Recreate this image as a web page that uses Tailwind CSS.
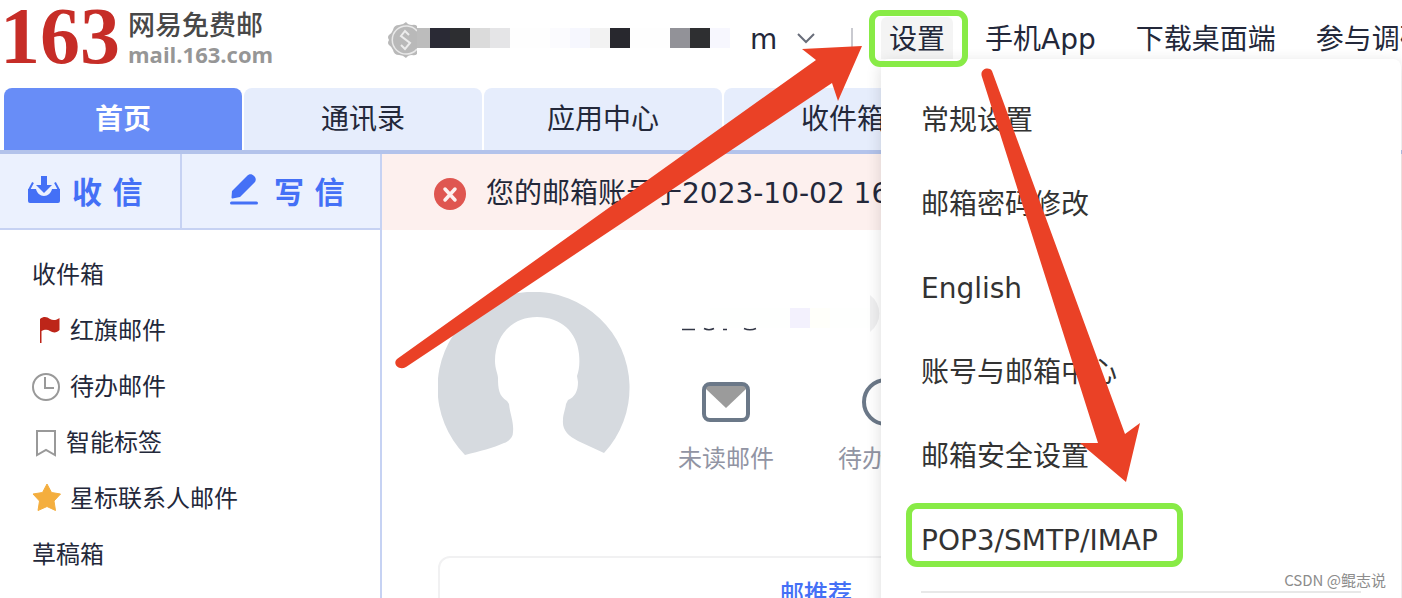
<!DOCTYPE html>
<html lang="zh-CN">
<head>
  <meta charset="UTF-8" />
  <meta name="viewport" content="width=device-width, initial-scale=1.0" />
  <script src="https://cdn.jsdelivr.net/npm/@tailwindcss/browser@4"></script>
  <title>163网易免费邮</title>
</head>
<body class="relative flex h-screen flex-col overflow-hidden bg-white font-['DejaVu_Sans','Noto_Sans_CJK_SC',sans-serif] text-[28px] leading-10 text-[#23283a]">

  <!-- 顶部 -->
  <header class="flex h-22 shrink-0 items-start whitespace-nowrap">
    <div class="flex h-19 w-[388px] shrink-0 items-center gap-2">
      <span class="pb-1 font-['Liberation_Serif',serif] text-[80px] leading-none font-bold text-[#c62d27]">163</span>
      <div class="flex flex-col">
        <span class="font-['Noto_Sans_CJK_SC',sans-serif] text-[27px] leading-8 font-medium text-[#484848]">网易免费邮</span>
        <span class="font-['Open_Sans',sans-serif] text-[22px] leading-7 font-bold text-[#969696]">mail.163.com</span>
      </div>
    </div>

    <!-- 账号 -->
    <div class="flex h-19 w-[493px] shrink-0 items-center">
      <svg class="h-10 w-[29px] shrink-0" viewBox="0 -4 29 40" fill="none">
        <path d="M18 0Q20 3 24 3Q27 2 29 4V32Q27 34 24 33Q20 33 18 36Q15 33 11 33Q6 33 5 28Q4 25 1 23Q-1 21 1 18Q-1 15 1 13Q4 11 5 8Q6 3 11 3Q15 3 18 0Z" fill="#b9b9b9"/>
        <path d="M29 9A14 14 0 1 0 29 27" stroke="#e9e9e9" stroke-width="1.5"/>
        <path d="M21 13L17 9L13 14L22 21L17 27L13 23" stroke="#ececec" stroke-width="2"/>
      </svg>
      <div class="flex h-5 shrink-0">
        <span class="w-[13px] bg-[#bcbcbc]"></span>
        <span class="w-5 bg-[#2a2a35]"></span>
        <span class="w-5 bg-[#2d2e31]"></span>
        <span class="w-5 bg-[#dbdbdb]"></span>
        <span class="w-5 bg-[#e5e5e7]"></span>
        <span class="w-10 bg-[#fefefe]"></span>
        <span class="w-5 bg-[#fbfbfe]"></span>
        <span class="w-5 bg-[#f6f7fe]"></span>
        <span class="w-5 bg-[#f2f2f2]"></span>
        <span class="w-5 bg-[#28282e]"></span>
        <span class="w-10 bg-[#fefefe]"></span>
        <span class="w-5 bg-[#929298]"></span>
        <span class="w-5 bg-[#2e2f31]"></span>
        <span class="w-5 bg-[#f7f7fe]"></span>
      </div>
      <button class="ml-5 flex items-center gap-5" aria-label="切换账号">
        <span class="pt-1">m</span>
        <svg class="h-3 w-[18px]" viewBox="0 0 18 12" fill="none"><path d="M1 2L9 10L17 2" stroke="#686d7a" stroke-width="2"/></svg>
      </button>
      <span class="ml-9 h-5 w-[2px] bg-[#c9cad0]"></span>
    </div>

    <nav class="flex h-19 items-center gap-8">
      <div class="relative">
        <button class="flex h-[42px] items-center rounded-t-md bg-[#f4f4f4] px-2 pt-1">设置</button>
        <!-- 设置菜单 -->
        <ul class="absolute top-full left-0 z-10 w-[520px] rounded-lg bg-white py-5 text-[#333] shadow-[0_4px_16px_rgba(0,0,0,0.14)]">
          <li><a href="#" class="flex h-21 items-center px-10">常规设置</a></li>
          <li><a href="#" class="flex h-21 items-center px-10">邮箱密码修改</a></li>
          <li><a href="#" class="flex h-21 items-center px-10">English</a></li>
          <li><a href="#" class="flex h-21 items-center px-10">账号与邮箱中心</a></li>
          <li><a href="#" class="flex h-21 items-center px-10">邮箱安全设置</a></li>
          <li><a href="#" class="flex h-21 items-center px-10">POP3/SMTP/IMAP</a></li>
          <li class="mx-10 my-2 h-[2px] bg-[#e8e8e8]"></li>
        </ul>
      </div>
      <div class="flex gap-10 pt-1">
        <a href="#">手机App</a>
        <a href="#">下载桌面端</a>
        <a href="#">参与调研</a>
      </div>
    </nav>
  </header>

  <!-- 标签页 -->
  <nav class="flex shrink-0 gap-[2px] border-b-4 border-[#b3c3eb] pl-1">
    <a href="#" class="flex h-[62px] w-[238px] shrink-0 items-center justify-center rounded-t-lg bg-[#688df7] pt-[2px] font-bold text-white">首页</a>
    <a href="#" class="flex h-[62px] w-[238px] shrink-0 items-center justify-center rounded-t-lg bg-[#e6edfc] pt-[2px]">通讯录</a>
    <a href="#" class="flex h-[62px] w-[238px] shrink-0 items-center justify-center rounded-t-lg bg-[#e6edfc] pt-[2px]">应用中心</a>
    <a href="#" class="flex h-[62px] w-[238px] shrink-0 items-center justify-center rounded-t-lg bg-[#e6edfc] pt-[2px]">收件箱</a>
  </nav>

  <div class="flex min-h-0 grow">
    <!-- 左侧栏 -->
    <aside class="w-[382px] shrink-0 border-r-2 border-[#c6d2f3]">
      <div class="flex h-19 border-b-2 border-[#c6d2f3] bg-[#ebf1fe] text-[30px] font-bold text-[#4470f6]">
        <button class="flex w-[182px] items-center gap-3 border-r-2 border-[#c6d2f3] pl-7">
          <svg class="h-8 w-8" viewBox="0 2 32 32" fill="none">
            <path d="M0 16H8C9 20 12 23 16 23S23 20 24 16H32V28Q32 30 30 30H2Q0 30 0 28Z" fill="#4470f6"/>
            <path d="M1 17L5 9.500M31 17L27 9.500" stroke="#4470f6" stroke-width="2"/>
            <path d="M13 3H19V12H24L16 20L8 12H13Z" fill="#4470f6"/>
          </svg>
          <span class="pt-1">收 信</span>
        </button>
        <button class="flex grow items-center gap-3 pl-12">
          <svg class="h-8 w-8 overflow-visible" viewBox="0 2 32 32" fill="none">
            <path d="M2 18L17 3C19 0.500 22 0.500 24 3C26.500 5 26 8 24.500 9.500L10 24L2.500 25.500Q1.500 25.500 1.500 24.500Z" fill="#4470f6"/>
            <path d="M1.500 30H26.500" stroke="#4470f6" stroke-width="3" stroke-linecap="round"/>
          </svg>
          <span class="pt-1">写 信</span>
        </button>
      </div>
      <ul class="px-8 pt-[17px] text-2xl">
        <li><a href="#" class="flex h-14 items-center">收件箱</a></li>
        <li>
          <a href="#" class="flex h-14 items-center gap-[10px]">
            <svg class="size-7" viewBox="0 0 28 28"><path d="M8 2C12 -1 15 0 18 2C21 4 25 3 27.500 1V13C25 16 21 16 18 14C15 12 12 13 9.500 14V26H8Z" fill="#bd2519"/></svg>
            <span>红旗邮件</span>
          </a>
        </li>
        <li>
          <a href="#" class="flex h-14 items-center gap-[10px]">
            <svg class="size-7" viewBox="0 0 28 28" fill="none" stroke="#999" stroke-width="2"><circle cx="14" cy="14" r="13"/><path d="M13 4V15H22"/></svg>
            <span>待办邮件</span>
          </a>
        </li>
        <li>
          <a href="#" class="flex h-14 items-center gap-[10px]">
            <svg class="h-7 w-6" viewBox="0 0 24 28" fill="none" stroke="#999" stroke-width="2"><path d="M5 2H23V26L14 21L5 26Z"/></svg>
            <span>智能标签</span>
          </a>
        </li>
        <li>
          <a href="#" class="flex h-14 items-center gap-[10px]">
            <svg class="size-7 overflow-visible" viewBox="0 1 28 28"><path d="M15 0L19.500 8.500L28.500 10L22 17L23.500 26.500L15 22.500L6 26.500L7.500 17L1 10L10.500 8.500Z" fill="#f4ae3e" stroke="#f4ae3e" stroke-linejoin="round"/></svg>
            <span>星标联系人邮件</span>
          </a>
        </li>
        <li><a href="#" class="flex h-14 items-center">草稿箱</a></li>
      </ul>
    </aside>

    <!-- 主内容 -->
    <main class="min-w-0 grow overflow-hidden">
      <div class="flex h-19 items-center gap-5 bg-[#fdf0ee] pt-1 pl-[52px] whitespace-nowrap">
        <svg class="size-8 shrink-0" viewBox="0 0 32 32"><circle cx="16" cy="16" r="16" fill="#df5650"/><path d="M11 11L21 22M21 11L11 22" stroke="#fdf0ee" stroke-width="3.500" stroke-linecap="round"/></svg>
        <p>您的邮箱账号于2023-10-02 16:20</p>
      </div>

      <div class="pt-[62px] pl-14">
        <div class="flex gap-12">
          <svg class="size-48 shrink-0" viewBox="0 0 192 192">
            <path d="M27 163A96 96 0 1 1 166 161L140 149C130 144 124 138 125 128C125 122 127 119 128 112L130 108C137 105 140 99 140 90L139 84C141 78 142 72 141 62C139 40 123 25 99 25C76 25 57 41 57 69C57 77 60 82 60 86C60 97 61 104 69 109L71 112C72 122 76 130 75 140C75 146 71 149 66 151C55 156 42 159 27 163Z" fill="#d6dadf"/>
          </svg>
          <div>
            <svg class="h-[86px] w-[206px]" viewBox="0 0 206 86">
              <rect x="32" y="16" width="160" height="20" fill="#fefffe"/>
              <rect x="112" y="16" width="20" height="20" fill="#f3f1fd"/>
              <rect x="132" y="16" width="20" height="20" fill="#fffffa"/>
              <path d="M192 3A23 23 0 0 1 192 40Z" fill="#f0f0f1"/>
              <path d="M4 37.500H17M45 37.500H49" stroke="#333746" stroke-width="1.500"/>
              <path d="M26 36.500Q31 39 36 36.500M66 36.500Q72 39 78 36.500" stroke="#333746" stroke-width="1.500" fill="none"/>
            </svg>
            <div class="flex gap-16 text-2xl text-[#9194a3]">
              <a href="#" class="flex w-24 shrink-0 flex-col items-center gap-[17px]">
                <svg class="size-12" viewBox="0 0 48 48"><path d="M4 8H44V11L24 30L4 11Z" fill="#9b9b9b"/><rect x="2" y="6" width="44" height="36" rx="6" fill="none" stroke="#6b7888" stroke-width="4"/></svg>
                <span class="leading-8">未读邮件</span>
              </a>
              <a href="#" class="flex w-24 shrink-0 flex-col items-center gap-[17px]">
                <svg class="size-12" viewBox="0 0 48 48" fill="none" stroke="#6b7888" stroke-width="4"><circle cx="24" cy="24" r="22"/><path d="M24 12V25H34"/></svg>
                <span class="leading-8">待办邮件</span>
              </a>
            </div>
          </div>
        </div>

        <section class="mt-[72px] mr-6 h-40 rounded-xl border-2 border-[#f1f1f2] pt-4 pl-85">
          <h2 class="text-2xl leading-10 font-medium text-[#4470f6]">邮推荐</h2>
        </section>
      </div>
    </main>
  </div>

  <!-- 标注：箭头与方框 -->
  <svg class="pointer-events-none absolute top-0 left-0 z-20 h-[598px] w-[1402px] max-w-none" viewBox="0 0 1402 598" fill="none">
    <rect x="872" y="13" width="93" height="51" rx="8" stroke="#88eb46" stroke-width="6"/>
    <rect x="909" y="506" width="271" height="58" rx="8" stroke="#88eb46" stroke-width="6"/>
    <path d="M397 359L816 60L802 49L862 46L838 101L832 83L406 367C399 371 392 364 397 359Z" fill="#ea4126"/>
    <path d="M982 77C979 69 989 66 992 71L1125 434L1140 423L1126 482L1080 443H1098Z" fill="#ea4126"/>
  </svg>

  <p class="absolute right-4 bottom-1 z-20 font-['Noto_Sans_CJK_SC',sans-serif] text-[15px] leading-7 text-[#8c8c8c]">CSDN @鲲志说</p>

</body>
</html>
